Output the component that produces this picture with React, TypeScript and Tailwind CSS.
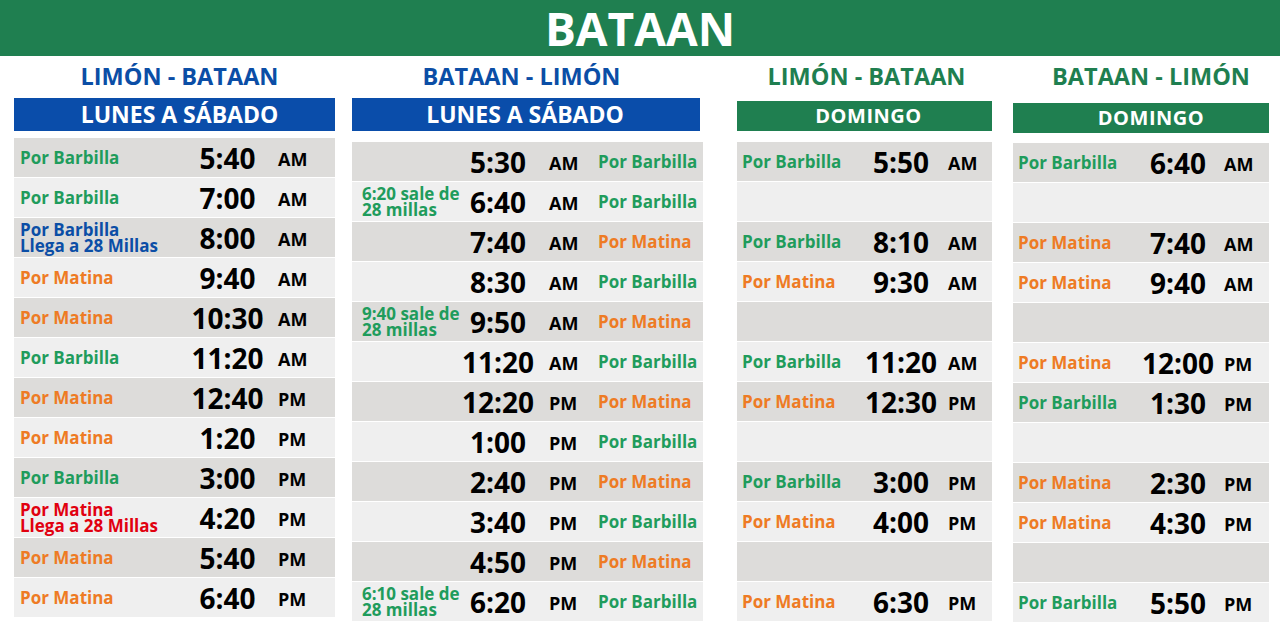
import React from "react";

type Tone = "g" | "o" | "b" | "r";
type Row = { label?: string[]; tone?: Tone; time?: string; ap?: string; note?: string[]; via?: string; viaTone?: Tone };

const toneCls: Record<Tone, string> = {
  g: "text-[#1f9c5c]",
  o: "text-[#ee7b24]",
  b: "text-[#0b4ea6]",
  r: "text-[#e1000f]",
};

const col1: Row[] = [
  { label: ["Por Barbilla"], tone: "g", time: "5:40", ap: "AM" },
  { label: ["Por Barbilla"], tone: "g", time: "7:00", ap: "AM" },
  { label: ["Por Barbilla", "Llega a 28 Millas"], tone: "b", time: "8:00", ap: "AM" },
  { label: ["Por Matina"], tone: "o", time: "9:40", ap: "AM" },
  { label: ["Por Matina"], tone: "o", time: "10:30", ap: "AM" },
  { label: ["Por Barbilla"], tone: "g", time: "11:20", ap: "AM" },
  { label: ["Por Matina"], tone: "o", time: "12:40", ap: "PM" },
  { label: ["Por Matina"], tone: "o", time: "1:20", ap: "PM" },
  { label: ["Por Barbilla"], tone: "g", time: "3:00", ap: "PM" },
  { label: ["Por Matina", "Llega a 28 Millas"], tone: "r", time: "4:20", ap: "PM" },
  { label: ["Por Matina"], tone: "o", time: "5:40", ap: "PM" },
  { label: ["Por Matina"], tone: "o", time: "6:40", ap: "PM" },
];

const col2: Row[] = [
  { time: "5:30", ap: "AM", via: "Por Barbilla", viaTone: "g" },
  { note: ["6:20 sale de", "28 millas"], time: "6:40", ap: "AM", via: "Por Barbilla", viaTone: "g" },
  { time: "7:40", ap: "AM", via: "Por Matina", viaTone: "o" },
  { time: "8:30", ap: "AM", via: "Por Barbilla", viaTone: "g" },
  { note: ["9:40 sale de", "28 millas"], time: "9:50", ap: "AM", via: "Por Matina", viaTone: "o" },
  { time: "11:20", ap: "AM", via: "Por Barbilla", viaTone: "g" },
  { time: "12:20", ap: "PM", via: "Por Matina", viaTone: "o" },
  { time: "1:00", ap: "PM", via: "Por Barbilla", viaTone: "g" },
  { time: "2:40", ap: "PM", via: "Por Matina", viaTone: "o" },
  { time: "3:40", ap: "PM", via: "Por Barbilla", viaTone: "g" },
  { time: "4:50", ap: "PM", via: "Por Matina", viaTone: "o" },
  { note: ["6:10 sale de", "28 millas"], time: "6:20", ap: "PM", via: "Por Barbilla", viaTone: "g" },
];

const col3: Row[] = [
  { label: ["Por Barbilla"], tone: "g", time: "5:50", ap: "AM" },
  {},
  { label: ["Por Barbilla"], tone: "g", time: "8:10", ap: "AM" },
  { label: ["Por Matina"], tone: "o", time: "9:30", ap: "AM" },
  {},
  { label: ["Por Barbilla"], tone: "g", time: "11:20", ap: "AM" },
  { label: ["Por Matina"], tone: "o", time: "12:30", ap: "PM" },
  {},
  { label: ["Por Barbilla"], tone: "g", time: "3:00", ap: "PM" },
  { label: ["Por Matina"], tone: "o", time: "4:00", ap: "PM" },
  {},
  { label: ["Por Matina"], tone: "o", time: "6:30", ap: "PM" },
];

const col4: Row[] = [
  { label: ["Por Barbilla"], tone: "g", time: "6:40", ap: "AM" },
  {},
  { label: ["Por Matina"], tone: "o", time: "7:40", ap: "AM" },
  { label: ["Por Matina"], tone: "o", time: "9:40", ap: "AM" },
  {},
  { label: ["Por Matina"], tone: "o", time: "12:00", ap: "PM" },
  { label: ["Por Barbilla"], tone: "g", time: "1:30", ap: "PM" },
  {},
  { label: ["Por Matina"], tone: "o", time: "2:30", ap: "PM" },
  { label: ["Por Matina"], tone: "o", time: "4:30", ap: "PM" },
  {},
  { label: ["Por Barbilla"], tone: "g", time: "5:50", ap: "PM" },
];

function Lines({ lines, tone }: { lines?: string[]; tone?: Tone }) {
  if (!lines) return null;
  return (
    <div className={`text-[17px] font-bold whitespace-nowrap ${lines.length > 1 ? "leading-[16px]" : "leading-none"} ${tone ? toneCls[tone] : ""}`}>
      {lines.map((l) => (
        <div key={l}>{l}</div>
      ))}
    </div>
  );
}

const bg = (i: number) => (i % 2 === 0 ? "bg-[#dddcda]" : "bg-[#efefef]");

// label | time | AM/PM
function LeftTable({ rows, labelW, timeW, apGap, pl }: { rows: Row[]; labelW: string; timeW: string; apGap: string; pl: string }) {
  return (
    <div className="flex flex-col gap-px">
      {rows.map((r, i) => (
        <div key={i} className={`h-[39px] flex items-center ${bg(i)}`}>
          <div className={`${labelW} ${pl} shrink-0`}>
            <Lines lines={r.label} tone={r.tone} />
          </div>
          <div className={`${timeW} shrink-0 text-center text-[28px] font-bold leading-none text-black`}>{r.time}</div>
          <div className={`${apGap} pt-[2px] text-[18px] font-bold leading-none text-black`}>{r.ap}</div>
        </div>
      ))}
    </div>
  );
}

function Title({ text, color, shift }: { text: string; color: string; shift: string }) {
  return (
    <div className={`h-[42px] flex items-center justify-center text-[23.5px] font-bold ${color} ${shift}`}>{text}</div>
  );
}

export default function App() {
  return (
    <div className="w-[1280px] h-[623px] overflow-hidden bg-white font-['Open_Sans',sans-serif]">
      <div className="h-[56px] bg-[#1f7f50] flex items-center justify-center">
        <h1 className="text-[46px] font-bold leading-[1.15] text-white">BATAAN</h1>
      </div>

      <div className="flex">
        {/* Limón - Bataan, lunes a sábado */}
        <div className="ml-[14px] w-[321px]">
          <Title text="LIMÓN - BATAAN" color="text-[#0b4ea6]" shift="pl-[10px]" />
          <div className="h-[33px] bg-[#0a4daa] flex items-center justify-center pl-[10px] text-[23px] font-bold text-white">
            LUNES A SÁBADO
          </div>
          <div className="mt-[7px]">
            <LeftTable rows={col1} labelW="w-[171px]" timeW="w-[85px]" apGap="ml-[8px]" pl="pl-[6px]" />
          </div>
        </div>

        {/* Bataan - Limón, lunes a sábado */}
        <div className="ml-[17px] w-[351px]">
          <Title text="BATAAN - LIMÓN" color="text-[#0b4ea6]" shift="pr-[12px]" />
          <div className="h-[33px] w-[348px] bg-[#0a4daa] flex items-center justify-center pr-[2px] text-[23px] font-bold text-white">
            LUNES A SÁBADO
          </div>
          <div className="mt-[11px] flex flex-col gap-px">
            {col2.map((r, i) => (
              <div key={i} className={`h-[39px] flex items-center ${bg(i)}`}>
                <div className="w-[106px] pl-[10px] shrink-0">
                  <Lines lines={r.note} tone="g" />
                </div>
                <div className="w-[80px] shrink-0 text-center text-[28px] font-bold leading-none text-black">{r.time}</div>
                <div className="ml-[11px] w-[49px] shrink-0 pt-[2px] text-[18px] font-bold leading-none text-black">{r.ap}</div>
                <Lines lines={r.via ? [r.via] : undefined} tone={r.viaTone} />
              </div>
            ))}
          </div>
        </div>

        {/* Limón - Bataan, domingo */}
        <div className="ml-[34px] w-[255px]">
          <Title text="LIMÓN - BATAAN" color="text-[#1f7f50]" shift="pl-[4px]" />
          <div className="mt-[3px] h-[30px] bg-[#1f7f50] flex items-center justify-center pl-[8px] text-[20px] font-bold tracking-[0.5px] text-white">
            DOMINGO
          </div>
          <div className="mt-[11px]">
            <LeftTable rows={col3} labelW="w-[124px]" timeW="w-[80px]" apGap="ml-[7px]" pl="pl-[5px]" />
          </div>
        </div>

        {/* Bataan - Limón, domingo */}
        <div className="ml-[21px] w-[256px]">
          <Title text="BATAAN - LIMÓN" color="text-[#1f7f50]" shift="pl-[20px]" />
          <div className="mt-[5px] h-[30px] bg-[#1f7f50] flex items-center justify-center pl-[20px] text-[20px] font-bold tracking-[0.5px] text-white">
            DOMINGO
          </div>
          <div className="mt-[10px]">
            <LeftTable rows={col4} labelW="w-[125px]" timeW="w-[80px]" apGap="ml-[6px]" pl="pl-[5px]" />
          </div>
        </div>
      </div>
    </div>
  );
}
